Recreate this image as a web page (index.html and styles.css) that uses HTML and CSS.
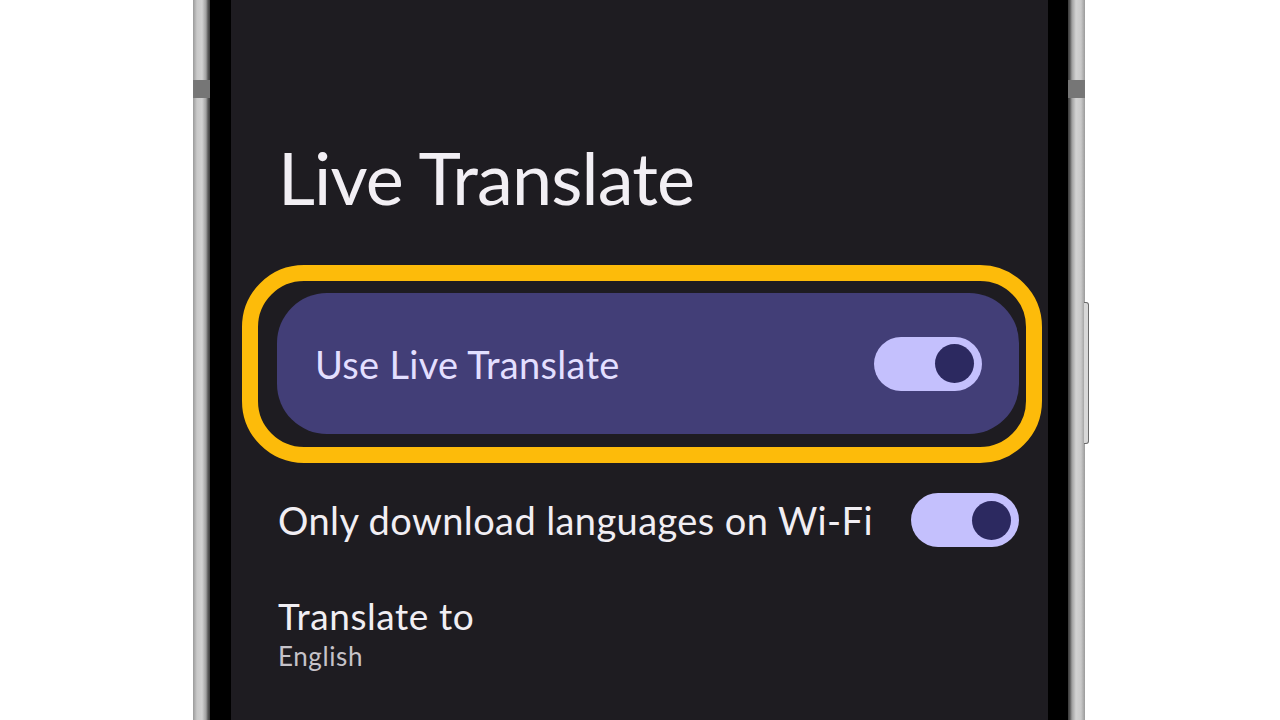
FILE: index.html
```html
<!DOCTYPE html>
<html>
<head>
<meta charset="utf-8">
<link rel="stylesheet" href="styles.css">
</head>
<body>
<div class="phone">
  <div class="frame frame-left"><span class="band"></span></div>
  <div class="bezel bezel-left"></div>
  <div class="screen">
    <h1 class="title">Live Translate</h1>
    <div class="card">
      <span class="card-label">Use Live Translate</span>
      <span class="toggle"><span class="thumb"></span></span>
      <span class="highlight"></span>
    </div>
    <div class="row">
      <span class="row-label">Only download languages on Wi-Fi</span>
      <span class="toggle"><span class="thumb"></span></span>
    </div>
    <div class="pref">
      <div class="pref-title">Translate to</div>
      <div class="pref-sub">English</div>
    </div>
  </div>
  <div class="bezel bezel-right"></div>
  <div class="frame frame-right"><span class="band"></span><span class="side-button"></span></div>
</div>
</body>
</html>
```

FILE: styles.css
```css
html, body {
  margin: 0;
  padding: 0;
  background: #ffffff;
  overflow: hidden;
}
body {
  width: 1280px;
  height: 720px;
  font-family: Lato, "Noto Sans", sans-serif;
}
.phone {
  display: flex;
  margin-left: 193px;
  width: 892px;
  height: 720px;
}
.frame {
  position: relative;
  width: 17px;
  flex: none;
}
.frame-left {
  background: linear-gradient(90deg, #9a9a9a 0px, #c9c9c9 4px, #d2d2d2 9px, #a0a0a0 13px, #5a5a5a 15px, #3a3a3a 17px);
}
.frame-right {
  background: linear-gradient(90deg, #3a3a3a 0px, #5a5a5a 2px, #a0a0a0 4px, #d2d2d2 8px, #c9c9c9 13px, #9a9a9a 17px);
}
.band {
  position: absolute;
  left: 0;
  right: 0;
  top: 80px;
  height: 18px;
  background: #767676;
}
.side-button {
  position: absolute;
  left: 16px;
  top: 302px;
  width: 4px;
  height: 140px;
  border: 1px solid #6a6a6a;
  border-left: none;
  border-radius: 0 3px 3px 0;
  background: #d8d8d8;
}
.bezel {
  flex: none;
  background: #000000;
}
.bezel-left {
  width: 21px;
}
.bezel-right {
  width: 20px;
}
.screen {
  flex: 1;
  background: #1e1c21;
  padding: 141px 29px 0 46px;
  display: flex;
  flex-direction: column;
  color: #f1eef3;
}
.title {
  margin: 0 0 0 1px;
  font-size: 72px;
  line-height: 72px;
  font-weight: 400;
  letter-spacing: -0.85px;
  color: #f2eff4;
}
.card {
  position: relative;
  margin-top: 80px;
  height: 141px;
  border-radius: 50px;
  background: #423e77;
  display: flex;
  align-items: center;
  justify-content: space-between;
  padding: 0 37px 0 38px;
}
.card-label {
  font-size: 38px;
  line-height: 46px;
  letter-spacing: 0.3px;
  color: #e3dfff;
}
.highlight {
  position: absolute;
  left: -35px;
  right: -23px;
  top: -28px;
  bottom: -29px;
  border: 16px solid #fdbb0a;
  border-radius: 62px;
  pointer-events: none;
}
.toggle {
  position: relative;
  flex: none;
  width: 108px;
  height: 54px;
  border-radius: 27px;
  background: #c4c0fd;
  display: flex;
  align-items: center;
  justify-content: flex-end;
  padding-right: 8px;
  box-sizing: border-box;
}
.thumb {
  width: 39px;
  height: 39px;
  border-radius: 50%;
  background: #2c2960;
}
.row {
  margin-top: 59px;
  height: 54px;
  display: flex;
  align-items: center;
  justify-content: space-between;
  padding-left: 1px;
}
.row-label {
  font-size: 38px;
  line-height: 46px;
  letter-spacing: 0.4px;
  color: #f1eef3;
}
.pref {
  margin-top: 47px;
  padding-left: 1px;
}
.pref-title {
  font-size: 37px;
  line-height: 44px;
  letter-spacing: 0.6px;
  color: #f1eef3;
}
.pref-sub {
  margin-top: 2px;
  font-size: 26px;
  line-height: 32px;
  letter-spacing: 0.6px;
  color: #c6c3c9;
}
```
